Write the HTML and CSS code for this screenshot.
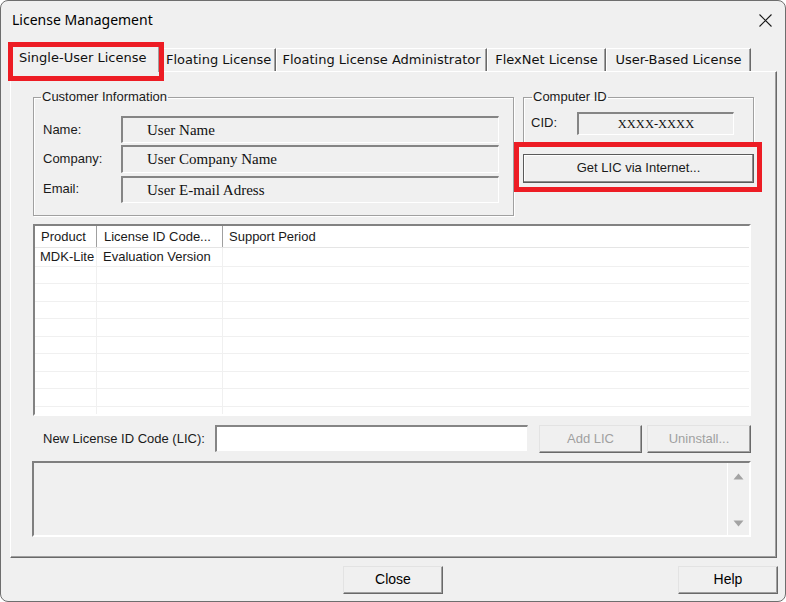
FILE: index.html
```html
<!DOCTYPE html>
<html lang="en">
<head>
<meta charset="utf-8">
<title>License Management</title>
<link rel="stylesheet" href="styles.css">
</head>
<body>
<div class="window">
  <div class="titlebar">
    <span class="title">License Management</span>
    <svg class="close-x" width="13" height="13" viewBox="0 0 13 13"><path d="M0.5 0.5L12.5 12.5M12.5 0.5L0.5 12.5" stroke="#1b1b1b" stroke-width="1.1" fill="none"/></svg>
  </div>
  <div class="tabstrip">
    <div class="tab active">Single-User License</div>
    <div class="tab t-floating">Floating License</div>
    <div class="tab t-admin">Floating License Administrator</div>
    <div class="tab t-flexnet">FlexNet License</div>
    <div class="tab t-user">User-Based License</div>
  </div>
  <div class="panel">
    <div class="top-row">
      <fieldset class="group customer">
        <legend>Customer Information</legend>
        <div class="form-grid">
          <span class="lbl">Name:</span><div class="field">User Name</div>
          <span class="lbl">Company:</span><div class="field">User Company Name</div>
          <span class="lbl">Email:</span><div class="field">User E-mail Adress</div>
        </div>
      </fieldset>
      <div class="right-col">
        <fieldset class="group computer">
          <legend>Computer ID</legend>
          <div class="cid-row">
            <span class="lbl cid-lbl">CID:</span>
            <div class="field cid">XXXX-XXXX</div>
          </div>
        </fieldset>
        <div class="callout">
          <div class="btn default">Get LIC via Internet...</div>
        </div>
      </div>
    </div>

    <div class="listview">
      <div class="lv-header">
        <div class="hcol c1">Product</div>
        <div class="hcol c2">License ID Code...</div>
        <div class="hcol c3">Support Period</div>
      </div>
      <div class="lv-body">
        <div class="lv-row"><div class="col c1">MDK-Lite</div><div class="col c2">Evaluation Version</div><div class="col c3"></div></div>
        <div class="lv-row"><div class="col c1"></div><div class="col c2"></div><div class="col c3"></div></div>
        <div class="lv-row"><div class="col c1"></div><div class="col c2"></div><div class="col c3"></div></div>
        <div class="lv-row"><div class="col c1"></div><div class="col c2"></div><div class="col c3"></div></div>
        <div class="lv-row"><div class="col c1"></div><div class="col c2"></div><div class="col c3"></div></div>
        <div class="lv-row"><div class="col c1"></div><div class="col c2"></div><div class="col c3"></div></div>
        <div class="lv-row"><div class="col c1"></div><div class="col c2"></div><div class="col c3"></div></div>
        <div class="lv-row"><div class="col c1"></div><div class="col c2"></div><div class="col c3"></div></div>
        <div class="lv-row"><div class="col c1"></div><div class="col c2"></div><div class="col c3"></div></div>
        <div class="lv-row"><div class="col c1"></div><div class="col c2"></div><div class="col c3"></div></div>
      </div>
    </div>

    <div class="lic-row">
      <span class="lbl lic-lbl">New License ID Code (LIC):</span>
      <div class="input"></div>
      <div class="btn disabled add">Add LIC</div>
      <div class="btn disabled uninstall">Uninstall...</div>
    </div>

    <div class="msgbox">
      <div class="msg-text"></div>
      <div class="scrollbar">
        <svg width="11" height="7" viewBox="0 0 11 7"><path d="M0.5 6.5L5.5 0.5L10.5 6.5Z" fill="#a3a3a3"/></svg>
        <svg width="11" height="7" viewBox="0 0 11 7"><path d="M0.5 0.5L5.5 6.5L10.5 0.5Z" fill="#a3a3a3"/></svg>
      </div>
    </div>
  </div>
  <div class="footer">
    <div class="btn foot close">Close</div>
    <div class="btn foot help">Help</div>
  </div>
</div>
</body>
</html>
```
FILE: styles.css
```css
html, body {
  margin: 0;
  padding: 0;
  background: #ffffff;
}
body {
  font-family: "Liberation Sans", Arial, sans-serif;
  font-size: 13px;
  color: #000;
}
.window {
  width: 786px;
  height: 602px;
  box-sizing: border-box;
  border: 1px solid #6e6e6e;
  border-radius: 8px;
  background: #f0f0f0;
  overflow: hidden;
  display: flex;
  flex-direction: column;
}
.titlebar {
  height: 43px;
  box-sizing: border-box;
  padding: 9px 13px 0 11px;
  display: flex;
  justify-content: space-between;
  align-items: flex-start;
  flex: none;
}
.title {
  font-family: "Noto Sans", "Open Sans", sans-serif;
  font-size: 14px;
  line-height: 20px;
  color: #000;
}
.close-x {
  margin-top: 4px;
}

/* Tabs */
.tabstrip {
  height: 27px;
  flex: none;
  display: flex;
  align-items: flex-end;
  padding-left: 11px;
}
.tab {
  height: 23px;
  box-sizing: border-box;
  padding: 0 5px 0 5px;
  font-family: "DejaVu Sans", sans-serif;
  font-size: 13px;
  line-height: 22px;
  color: #111;
  border-top: 1px solid #ffffff;
  border-left: 1px solid #ffffff;
  border-right: 1px solid #696969;
  box-shadow: inset -1px 0 0 #a0a0a0;
  white-space: nowrap;
  text-align: center;
}
.tab.active {
  height: 28px;
  width: 148px;
  margin-bottom: -1px;
  padding: 0 6px 0 6px;
  line-height: 25px;
  text-align: left;
  position: relative;
  z-index: 1;
  background: #f0f0f0;
}
.tab.active::after {
  content: "";
  position: absolute;
  left: -5px;
  right: -5px;
  top: -3px;
  bottom: -9px;
  border: 5px solid #ed1c24;
}
.t-floating { width: 116px; }
.t-admin { width: 211px; }
.t-flexnet { width: 119px; }
.t-user { width: 145px; }

/* Panel */
.panel {
  width: 767px;
  height: 487px;
  margin-left: 9px;
  box-sizing: border-box;
  flex: none;
  border-top: 1px solid #ffffff;
  border-left: 1px solid #ffffff;
  border-right: 1px solid #696969;
  border-bottom: 1px solid #696969;
  box-shadow: inset -1px -1px 0 #a0a0a0;
  padding-top: 17px;
  display: flex;
  flex-direction: column;
}
.top-row {
  display: flex;
  align-items: flex-start;
  margin-left: 22px;
}
.group {
  margin: 0;
  box-sizing: border-box;
  border: 1px solid #a0a0a0;
  box-shadow: inset 1px 1px 0 #ffffff, 1px 1px 0 #ffffff;
}
.group legend {
  font-size: 13px;
  line-height: 16px;
  padding: 0 1px;
  margin-left: -2px;
  color: #1a1a1a;
}
.customer {
  width: 480px;
  padding: 11px 14px 12px 9px;
}
.form-grid {
  display: grid;
  grid-template-columns: 78px 378px;
  grid-template-rows: 27px 28px 28px;
  row-gap: 2px;
  align-items: start;
}
.lbl {
  color: #1a1a1a;
  font-size: 13px;
  line-height: 16px;
}
.form-grid .lbl {
  margin-top: 6px;
}
.field {
  height: 100%;
  box-sizing: border-box;
  border-style: solid;
  border-width: 2px 1px 1px 2px;
  border-color: #858585 #ffffff #ffffff #858585;
  background: #f0f0f0;
  font-family: "Liberation Serif", "Times New Roman", serif;
  font-size: 15px;
  line-height: 24px;
  padding-left: 24px;
  color: #111;
}
.form-grid .field:nth-child(6) {
  height: 27px;
  margin-top: 1px;
}
.right-col {
  width: 248px;
  display: flex;
  flex-direction: column;
}
.computer {
  width: 231px;
  margin-left: 9px;
  border-bottom: none;
  padding: 7px 10px 7px 7px;
}
.computer legend {
  margin-left: 1px;
}
.cid-row {
  display: flex;
  align-items: center;
}
.cid-lbl {
  width: 46px;
  margin-top: -2px;
}
.field.cid {
  width: 157px;
  height: 23px;
  padding-left: 0;
  text-align: center;
  font-size: 12.5px;
  line-height: 20px;
}
.callout {
  box-sizing: border-box;
  height: 50px;
  border: 5px solid #ed1c24;
  padding: 7px 3px 4px 4px;
}

/* Buttons */
.btn {
  box-sizing: border-box;
  background: #f0f0f0;
  border-style: solid;
  border-width: 1px;
  border-color: #ffffff #696969 #696969 #ffffff;
  box-shadow: inset -1px -1px 0 #a0a0a0;
  text-align: center;
  font-size: 13px;
  color: #000;
}
.btn.default {
  height: 29px;
  line-height: 26px;
  border-color: #5a5a5a;
  box-shadow: inset -1px -1px 0 #8c8c8c, inset 1px 1px 0 #ffffff;
  color: #1a1a1a;
}
.btn.disabled {
  height: 28px;
  line-height: 25px;
  color: #a0a0a0;
  border-color: #e3e3e3 #696969 #696969 #e3e3e3;
}

/* List view */
.listview {
  margin: 8px 0 0 22px;
  width: 718px;
  height: 192px;
  box-sizing: border-box;
  border-style: solid;
  border-width: 2px;
  border-color: #828282 #ffffff #ffffff #828282;
  background: #ffffff;
  overflow: hidden;
}
.lv-header {
  display: flex;
  height: 22px;
  box-sizing: border-box;
  border-bottom: 1px solid #e5e5e5;
  background: #ffffff;
}
.hcol {
  box-sizing: border-box;
  line-height: 21px;
  border-right: 1px solid #a0a0a0;
  box-shadow: 1px 0 0 #ffffff;
  color: #1a1a1a;
  white-space: nowrap;
}
.c1 { width: 62px; flex: none; }
.c2 { width: 126px; flex: none; }
.c3 { flex: 1; border-right: none; }
.hcol.c1 { padding-left: 6px; }
.hcol.c2 { padding-left: 7px; }
.hcol.c3 { padding-left: 6px; border-right: none; box-shadow: none; }
.lv-row {
  display: flex;
  height: 17.5px;
  box-sizing: border-box;
  border-bottom: 1px solid #f0f0f0;
}
.col {
  box-sizing: border-box;
  border-right: 1px solid #f0f0f0;
  line-height: 17px;
  white-space: nowrap;
  color: #1a1a1a;
}
.col.c1 { padding-left: 5px; }
.col.c2 { padding-left: 6px; }
.col.c3 { border-right: none; }
.lv-row:first-child { height: 18.5px; }
.lv-row:first-child .col { line-height: 18px; }

/* LIC row */
.lic-row {
  display: flex;
  align-items: center;
  margin-top: 9px;
  height: 28px;
}
.lic-lbl {
  width: 172px;
  margin-left: 32px;
  flex: none;
}
.input {
  width: 313px;
  height: 27px;
  box-sizing: border-box;
  border-style: solid;
  border-width: 2px 1px 1px 2px;
  border-color: #858585 #f0f0f0 #f0f0f0 #858585;
  background: #ffffff;
  align-self: flex-start;
}
.btn.add {
  width: 103px;
  margin-left: 11px;
}
.btn.uninstall {
  width: 104px;
  margin-left: 5px;
}

/* Message box */
.msgbox {
  margin: 8px 0 0 21px;
  width: 719px;
  height: 76px;
  box-sizing: border-box;
  border-style: solid;
  border-width: 2px;
  border-color: #7f7f7f #ffffff #ffffff #7f7f7f;
  background: #f0f0f0;
  display: flex;
}
.msg-text {
  flex: 1;
}
.scrollbar {
  width: 22px;
  border-left: 1px solid #ffffff;
  display: flex;
  flex-direction: column;
  align-items: center;
  justify-content: space-between;
  padding: 10px 0 8px 0;
  box-sizing: border-box;
}

/* Footer */
.footer {
  flex: none;
  display: flex;
  padding: 8px 7px 0 342px;
}
.btn.foot {
  height: 28px;
  line-height: 25px;
  font-size: 14px;
  border-color: #e3e3e3 #696969 #696969 #e3e3e3;
}
.btn.close {
  width: 100px;
}
.btn.help {
  width: 100px;
  margin-left: auto;
}
```
